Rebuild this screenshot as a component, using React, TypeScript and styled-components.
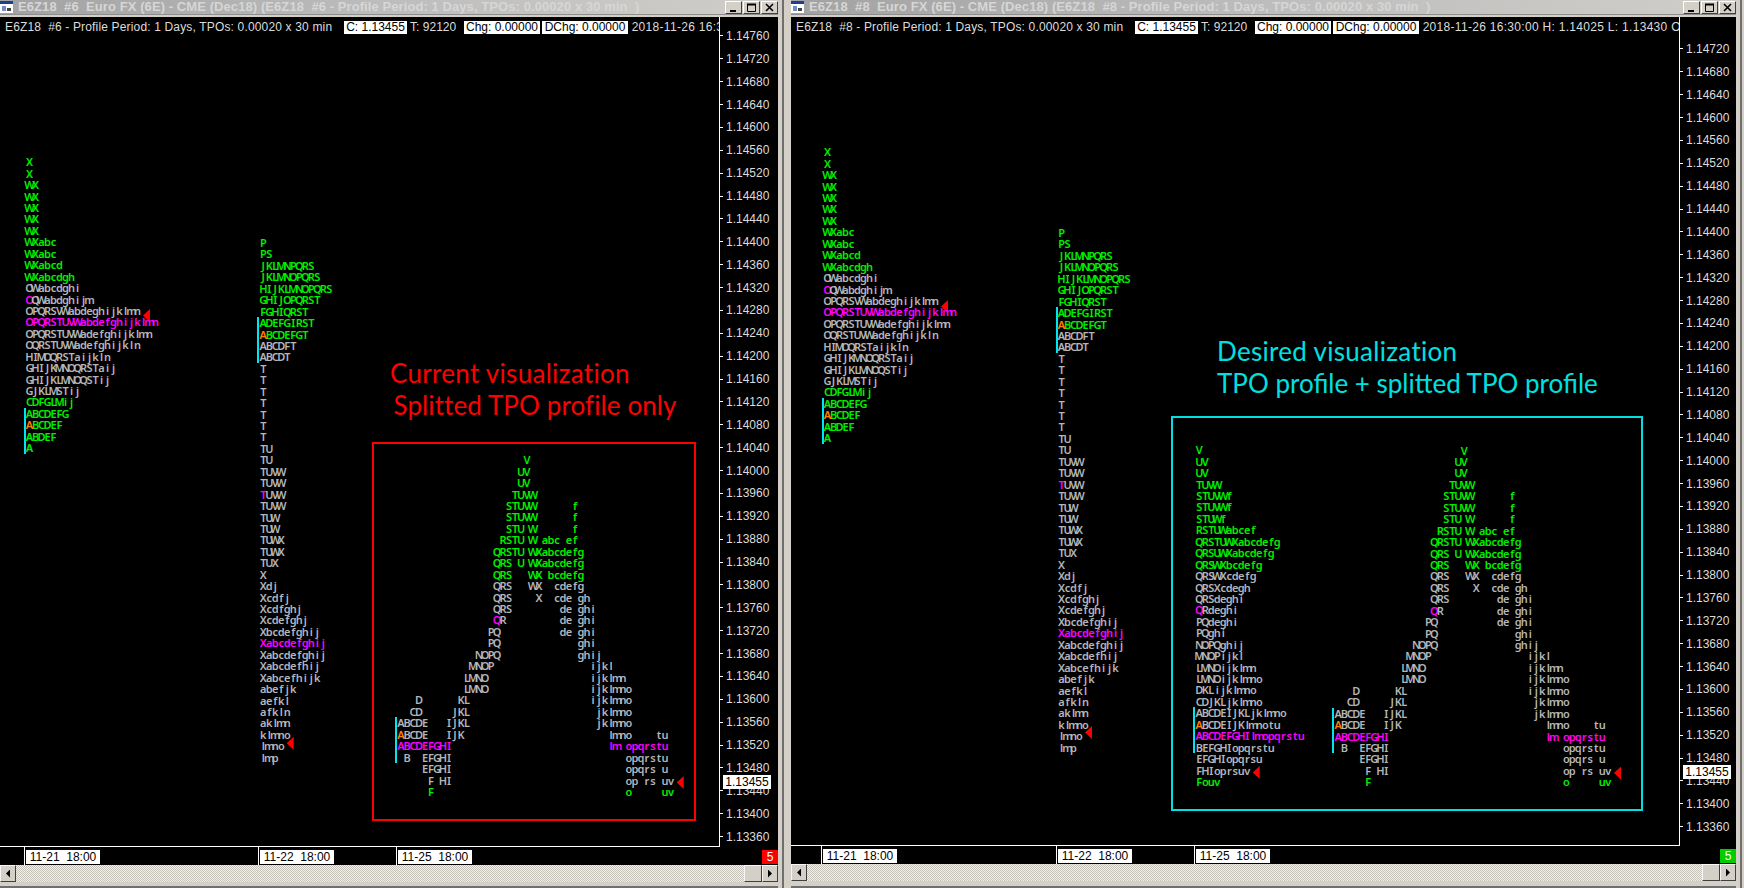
import type { ReactNode } from "react";
import styled, { createGlobalStyle } from "styled-components";

const ROW = 11.44;
const LETTERS = "ABCDEFGHIJKLMNOPQRSTUVWXabcdefghijklmnopqrstuv";

const GlobalStyle = createGlobalStyle`
  html, body {
    margin: 0;
    padding: 0;
    background: #d4d0c8;
  }
`;

const Desktop = styled.div`
  width: 1744px;
  height: 888px;
  display: flex;
  overflow: hidden;
  background: #d4d0c8;
  font-family: "Liberation Sans", Arial, sans-serif;
`;

const Win = styled.div<{ $w: number; $gap: number }>`
  width: ${(p) => p.$w}px;
  flex: none;
  margin-right: ${(p) => p.$gap}px;
  display: flex;
  flex-direction: column;
  padding-right: 4px;
  border-right: 2px solid #6f6f6f;
  box-sizing: content-box;
`;

const TitleBar = styled.div`
  height: 14px;
  display: flex;
  align-items: center;
  flex: none;
  background: linear-gradient(90deg, #a2a2a2, #bdbdbd 50%, #d0cec9);
  margin-right: -4px;
  padding-right: 4px;
`;

const TitleIcon = styled.svg`
  width: 14px;
  height: 14px;
  flex: none;
`;

const TitleText = styled.div`
  margin-left: 4px;
  flex: 1;
  font-size: 13px;
  font-weight: 700;
  letter-spacing: 0.08px;
  line-height: 14px;
  color: #d6d6d6;
  white-space: pre;
`;

const WinButtons = styled.div`
  display: flex;
  gap: 1px;
  flex: none;
`;

const WinButton = styled.div`
  width: 17px;
  height: 13px;
  box-sizing: border-box;
  background: #d4d0c8;
  border: 1px solid;
  border-color: #fff #404040 #404040 #fff;
  display: flex;
  align-items: center;
  justify-content: center;
`;

const TitleGap = styled.div`
  height: 3px;
  flex: none;
  background: #d4d0c8;
  border-top: 1px solid #8e8e8e;
  box-sizing: border-box;
`;

const Chart = styled.div`
  flex: 1;
  min-height: 0;
  display: flex;
  background: #000;
`;

const Plot = styled.div<{ $w: number }>`
  width: ${(p) => p.$w}px;
  flex: none;
  position: relative;
  box-sizing: border-box;
  border-right: 1px solid #fff;
  border-bottom: 1px solid #fff;
  overflow: hidden;
`;

const Info = styled.div`
  height: 13px;
  margin-top: 4px;
  padding-left: 5px;
  display: flex;
  align-items: center;
  font-size: 12px;
  color: #dcdcdc;
  white-space: pre;
`;

const InfoText = styled.span<{ $w?: number; $track?: number }>`
  flex: none;
  width: ${(p) => (p.$w ? `${p.$w}px` : "auto")};
  letter-spacing: ${(p) => p.$track ?? 0}px;
  line-height: 13px;
`;

const InfoBox = styled(InfoText)`
  background: #fff;
  color: #000;
  text-align: center;
`;

const PriceAxis = styled.div<{ $top: number }>`
  flex: 1;
  position: relative;
  padding-top: ${(p) => p.$top}px;
`;

const PriceRow = styled.div`
  height: 22.88px;
  display: flex;
  align-items: center;
  font-size: 12px;
  color: #dcdcdc;
  &::before {
    content: "";
    width: 3px;
    height: 1px;
    margin-right: 3px;
    background: #fff;
  }
`;

const LastPrice = styled.div<{ $top: number }>`
  position: absolute;
  left: 3px;
  top: ${(p) => p.$top}px;
  width: 48px;
  height: 14px;
  background: #fff;
  color: #000;
  font-size: 12px;
  line-height: 14px;
  text-align: center;
`;

const TimeAxis = styled.div<{ $pad: number }>`
  height: 18px;
  flex: none;
  background: #000;
  display: flex;
  padding-left: ${(p) => p.$pad}px;
`;

const TimeTick = styled.div<{ $w: number }>`
  width: ${(p) => p.$w}px;
  flex: none;
  box-sizing: border-box;
  border-left: 1px solid #fff;
  padding: 3px 0 0 1px;
`;

const TimeLabel = styled.span`
  display: block;
  width: 74px;
  height: 14px;
  background: #fff;
  color: #000;
  font-size: 12px;
  line-height: 14px;
  text-align: center;
  white-space: pre;
`;

const Badge = styled.div<{ $bg: string }>`
  width: 16px;
  height: 14px;
  margin: 3px 0 0 auto;
  background: ${(p) => p.$bg};
  color: #fff;
  font-size: 12px;
  line-height: 14px;
  text-align: center;
`;

const ScrollBar = styled.div`
  height: 17px;
  flex: none;
  display: flex;
  background: repeating-conic-gradient(#c4c1b9 0 25%, #f2f1ee 0 50%) 0 0 / 2px 2px;
`;

const ScrollButton = styled.div<{ $w?: number; $end?: boolean }>`
  width: ${(p) => p.$w ?? 16}px;
  margin-left: ${(p) => (p.$end ? "auto" : "0")};
  flex: none;
  box-sizing: border-box;
  background: #d4d0c8;
  border: 1px solid;
  border-color: #f6f6f6 #404040 #404040 #f6f6f6;
  display: flex;
  align-items: center;
  justify-content: center;
`;

const Arrow = styled.span<{ $left?: boolean }>`
  width: 4px;
  height: 8px;
  background: #000;
  clip-path: ${(p) =>
    p.$left ? "polygon(100% 0, 100% 100%, 0 50%)" : "polygon(0 0, 0 100%, 100% 50%)"};
`;

const BottomFrame = styled.div<{ $h: number }>`
  height: ${(p) => p.$h}px;
  flex: none;
  box-sizing: border-box;
  background: #d4d0c8;
  border-bottom: 2px solid #6f6f6f;
`;

const ProfileBox = styled.div<{ $x: number; $y: number }>`
  position: absolute;
  left: ${(p) => p.$x}px;
  top: ${(p) => p.$y}px;
  font-family: "Noto Sans", "DejaVu Sans", sans-serif;
  font-size: 11px;
  font-weight: 600;
  line-height: ${ROW}px;
`;

const Row = styled.div`
  position: relative;
  height: ${ROW}px;
  display: flex;
  white-space: pre;
`;

const Glyph = styled.span<{ $c: string }>`
  flex: 0 0 6px;
  width: 6px;
  display: flex;
  justify-content: center;
  color: ${(p) => p.$c};
`;

const ValueBar = styled.div<{ $row: number }>`
  position: absolute;
  left: -3px;
  top: ${(p) => p.$row * ROW}px;
  width: 2px;
  height: ${ROW * 4}px;
  background: #00e5ee;
`;

const Marker = styled.div<{ $x: number; $y: number }>`
  position: absolute;
  left: ${(p) => p.$x}px;
  top: ${(p) => p.$y}px;
  width: 7px;
  height: 13px;
  background: #ff0000;
  clip-path: polygon(100% 0, 100% 100%, 0 50%);
`;

const Frame = styled.div<{ $c: string; $x: number; $y: number; $w: number; $h: number }>`
  position: absolute;
  left: ${(p) => p.$x}px;
  top: ${(p) => p.$y}px;
  width: ${(p) => p.$w}px;
  height: ${(p) => p.$h}px;
  box-sizing: border-box;
  border: 2px solid ${(p) => p.$c};
`;

const Caption = styled.div<{ $c: string; $x: number; $y: number }>`
  position: absolute;
  left: ${(p) => p.$x}px;
  top: ${(p) => p.$y}px;
  color: ${(p) => p.$c};
  font-family: Lato, "Open Sans", sans-serif;
  font-size: 26px;
  line-height: 32px;
  white-space: pre;
`;

const CaptionLine = styled.div<{ $indent?: number; $track?: number }>`
  margin-left: ${(p) => p.$indent ?? 0}px;
  letter-spacing: ${(p) => p.$track ?? 0}px;
`;

const COLORS: Record<string, string> = {
  g: "#00f000",
  s: "#b4b6ba",
  m: "#ff00ff",
  o: "#ff8000",
};

// tag before the colon: g green, s silver, m magenta,
// q magenta first letter then silver, a / b orange first letter then green / silver
const glyphColor = (tag: string, first: boolean) => {
  if (tag === "q") return first ? COLORS.m : COLORS.s;
  if (tag === "a") return first ? COLORS.o : COLORS.g;
  if (tag === "b") return first ? COLORS.o : COLORS.s;
  return COLORS[tag];
};

const narrowProfile = [
  "g:X", "g:X", "g:WX", "g:WX", "g:WX", "g:WX", "g:WX", "g:WXabc", "g:WXabc", "g:WXabcd",
  "g:WXabcdgh", "s:OWabcdghi", "q:OQWabdghijm", "s:OPQRSVWabdeghijklmn",
  "m:OPQRSTUVWabdefghijklmn", "s:OPQRSTUVWadefghijklmn", "s:OQRSTUVWadefghijkln",
  "s:HIMOQRSTaijkln", "s:GHIJKMNOQRSTaij", "s:GHIJKLMNOQSTij", "s:GJKLMSTij",
  "g:CDFGLMij", "g:ABCDEFG", "a:ABCDEF", "g:ABDEF", "g:A",
];

const wideProfile = [
  "g:P", "g:PS", "g:JKLMNPQRS", "g:JKLMNOPQRS", "g:HIJKLMNOPQRS", "g:GHIJOPQRST", "g:FGHIQRST",
  "g:ADEFGIRST", "a:ABCDEFGT", "s:ABCDFT", "s:ABCDT", "s:T", "s:T", "s:T", "s:T", "s:T", "s:T",
  "s:T", "s:TU", "s:TU", "s:TUVW", "s:TUVW", "q:TUVW", "s:TUVW", "s:TUW", "s:TUW", "s:TUWX",
  "s:TUWX", "s:TUX", "s:X", "s:Xdj", "s:Xcdfj", "s:Xcdfghj", "s:Xcdefghj", "s:Xbcdefghij",
  "m:Xabcdefghij", "s:Xabcdefghij", "s:Xabcdefhij", "s:Xabcefhijk", "s:abefjk", "s:aefkl",
  "s:afkln", "s:aklmn", "s:klmno", "s:lmno", "s:lmp",
];

const fullProfile = [
  "g:V", "g:UV", "g:UV", "g:TUVW", "g:STUVWf", "g:STUVWf", "g:STUWf", "g:RSTUWabcef",
  "g:QRSTUWXabcdefg", "g:QRSUWXabcdefg", "g:QRSWXbcdefg", "s:QRSWXcdefg", "s:QRSXcdegh",
  "s:QRSdeghi", "q:QRdeghi", "s:PQdeghi", "s:PQghi", "s:NOPQghij", "s:MNOPijkl",
  "s:LMNOijklmn", "s:LMNOijklmno", "s:DKLijklmno", "s:CDJKLjklmno", "s:ABCDEIJKLjklmno",
  "b:ABCDEIJKlmnotu", "m:ABCDEFGHIlmopqrstu", "s:BEFGHIopqrstu", "s:EFGHIopqrsu",
  "s:FHIoprsuv", "g:Fouv",
];

// every letter of a split profile sits in the column of its half hour
const split = (row: string) => {
  const cols = Array.from({ length: LETTERS.length }, () => " ");
  for (const ch of row.slice(2)) cols[LETTERS.indexOf(ch)] = ch;
  return row.slice(0, 2) + cols.join("").trimEnd();
};

function Profile(props: {
  rows: string[];
  x: number;
  y: number;
  bar: number;
  marker: [number, number];
}) {
  return (
    <ProfileBox $x={props.x} $y={props.y}>
      <ValueBar $row={props.bar} />
      <Marker $x={props.marker[0]} $y={props.marker[1]} />
      {props.rows.map((row, i) => {
        const tag = row[0];
        const text = row.slice(2);
        const start = text.search(/\S/);
        return (
          <Row key={i}>
            {text.split("").map((ch, j) => (
              <Glyph key={j} $c={glyphColor(tag, j === start)}>
                {ch}
              </Glyph>
            ))}
          </Row>
        );
      })}
    </ProfileBox>
  );
}

function priceList(first: number) {
  const out: string[] = [];
  for (let p = first; p >= 113360; p -= 40) out.push((p / 100000).toFixed(5));
  return out;
}

function Window(props: {
  id: string;
  w: number;
  gap: number;
  plotW: number;
  firstPrice: number;
  axisTop: number;
  lastTop: number;
  timePad: number;
  ticks: [number, number];
  badge: string;
  bottom: number;
  children: ReactNode;
}) {
  const title = `E6Z18  #${props.id}  Euro FX (6E) - CME (Dec18) (E6Z18  #${props.id} - Profile Period: 1 Days, TPOs: 0.00020 x 30 min  )`;
  return (
    <Win $w={props.w} $gap={props.gap}>
      <TitleBar>
        <TitleIcon viewBox="0 0 14 14">
          <rect x="0" y="1" width="13" height="12" fill="#fff" />
          <rect x="0" y="1" width="13" height="3" fill="#1c3f94" />
          <rect x="2" y="6" width="4" height="5" fill="#6f8fc0" />
          <rect x="7" y="8" width="4" height="3" fill="#444" />
        </TitleIcon>
        <TitleText>{title}</TitleText>
        <WinButtons>
          <WinButton>
            <svg width="9" height="9" viewBox="0 0 9 9">
              <rect x="1" y="7" width="6" height="2" fill="#000" />
            </svg>
          </WinButton>
          <WinButton>
            <svg width="9" height="9" viewBox="0 0 9 9">
              <path d="M0.5 1.5h8v7h-8z" fill="none" stroke="#000" />
              <path d="M0 1.5h9" stroke="#000" strokeWidth="2" />
            </svg>
          </WinButton>
          <WinButton>
            <svg width="9" height="9" viewBox="0 0 9 9">
              <path d="M1 1l7 7M8 1l-7 7" stroke="#000" strokeWidth="1.6" />
            </svg>
          </WinButton>
        </WinButtons>
      </TitleBar>
      <TitleGap />
      <Chart>
        <Plot $w={props.plotW}>
          <Info>
            <InfoText $w={339} $track={0.16}>{`E6Z18  #${props.id} - Profile Period: 1 Days, TPOs: 0.00020 x 30 min`}</InfoText>
            <InfoBox $w={63}>C: 1.13455</InfoBox>
            <InfoText $w={57}>{" T: 92120"}</InfoText>
            <InfoBox $w={76}>Chg: 0.00000</InfoBox>
            <InfoText $w={2} />
            <InfoBox $w={86}>DChg: 0.00000</InfoBox>
            <InfoText $track={0.3}>{" 2018-11-26 16:30:00 H: 1.14025 L: 1.13430 O"}</InfoText>
          </Info>
          {props.children}
        </Plot>
        <PriceAxis $top={props.axisTop}>
          {priceList(props.firstPrice).map((p) => (
            <PriceRow key={p}>{p}</PriceRow>
          ))}
          <LastPrice $top={props.lastTop}>1.13455</LastPrice>
        </PriceAxis>
      </Chart>
      <TimeAxis $pad={props.timePad}>
        <TimeTick $w={props.ticks[0]}>
          <TimeLabel>11-21  18:00</TimeLabel>
        </TimeTick>
        <TimeTick $w={props.ticks[1]}>
          <TimeLabel>11-22  18:00</TimeLabel>
        </TimeTick>
        <TimeTick $w={90}>
          <TimeLabel>11-25  18:00</TimeLabel>
        </TimeTick>
        <Badge $bg={props.badge}>5</Badge>
      </TimeAxis>
      <ScrollBar>
        <ScrollButton>
          <Arrow $left />
        </ScrollButton>
        <ScrollButton $w={18} $end />
        <ScrollButton $w={16}>
          <Arrow />
        </ScrollButton>
      </ScrollBar>
      <BottomFrame $h={props.bottom} />
    </Win>
  );
}

function App() {
  return (
    <>
      <GlobalStyle />
      <Desktop>
        <Window
          id="6"
          w={778}
          gap={7}
          plotW={720}
          firstPrice={114760}
          axisTop={7.5}
          lastTop={758}
          timePad={24}
          ticks={[234, 138]}
          badge="#ff0000"
          bottom={6}
        >
          <Profile rows={narrowProfile} x={26.5} y={139.3} bar={22} marker={[116.5, 152.7]} />
          <Profile rows={wideProfile} x={260.3} y={220} bar={7} marker={[26.4, 499.7]} />
          <Profile rows={fullProfile.map(split)} x={398} y={437.3} bar={23} marker={[278.7, 321.7]} />
          <Frame $c="#ff0000" $x={372} $y={425} $w={324} $h={379} />
          <Caption $c="#ff0000" $x={390} $y={340}>
            <CaptionLine $track={0.3}>Current visualization</CaptionLine>
            <CaptionLine $indent={3.5} $track={0.1}>Splitted TPO profile only</CaptionLine>
          </Caption>
        </Window>
        <Window
          id="8"
          w={945}
          gap={0}
          plotW={889}
          firstPrice={114720}
          axisTop={20.5}
          lastTop={748}
          timePad={30}
          ticks={[235, 138]}
          badge="#00cc00"
          bottom={7}
        >
          <Profile rows={narrowProfile} x={33.5} y={129.3} bar={22} marker={[116.5, 153.7]} />
          <Profile rows={wideProfile} x={267.5} y={210} bar={7} marker={[26.5, 499]} />
          <Profile rows={fullProfile} x={405.3} y={427.3} bar={23} marker={[56.4, 321.7]} />
          <Profile rows={fullProfile.map(split)} x={544.3} y={427.6} bar={23} marker={[278.7, 322]} />
          <Frame $c="#00e0e0" $x={380} $y={399} $w={472} $h={395} />
          <Caption $c="#00e0e0" $x={426} $y={318}>
            <CaptionLine $track={0.3}>Desired visualization</CaptionLine>
            <CaptionLine>TPO profile + splitted TPO profile</CaptionLine>
          </Caption>
        </Window>
      </Desktop>
    </>
  );
}

export default App;
